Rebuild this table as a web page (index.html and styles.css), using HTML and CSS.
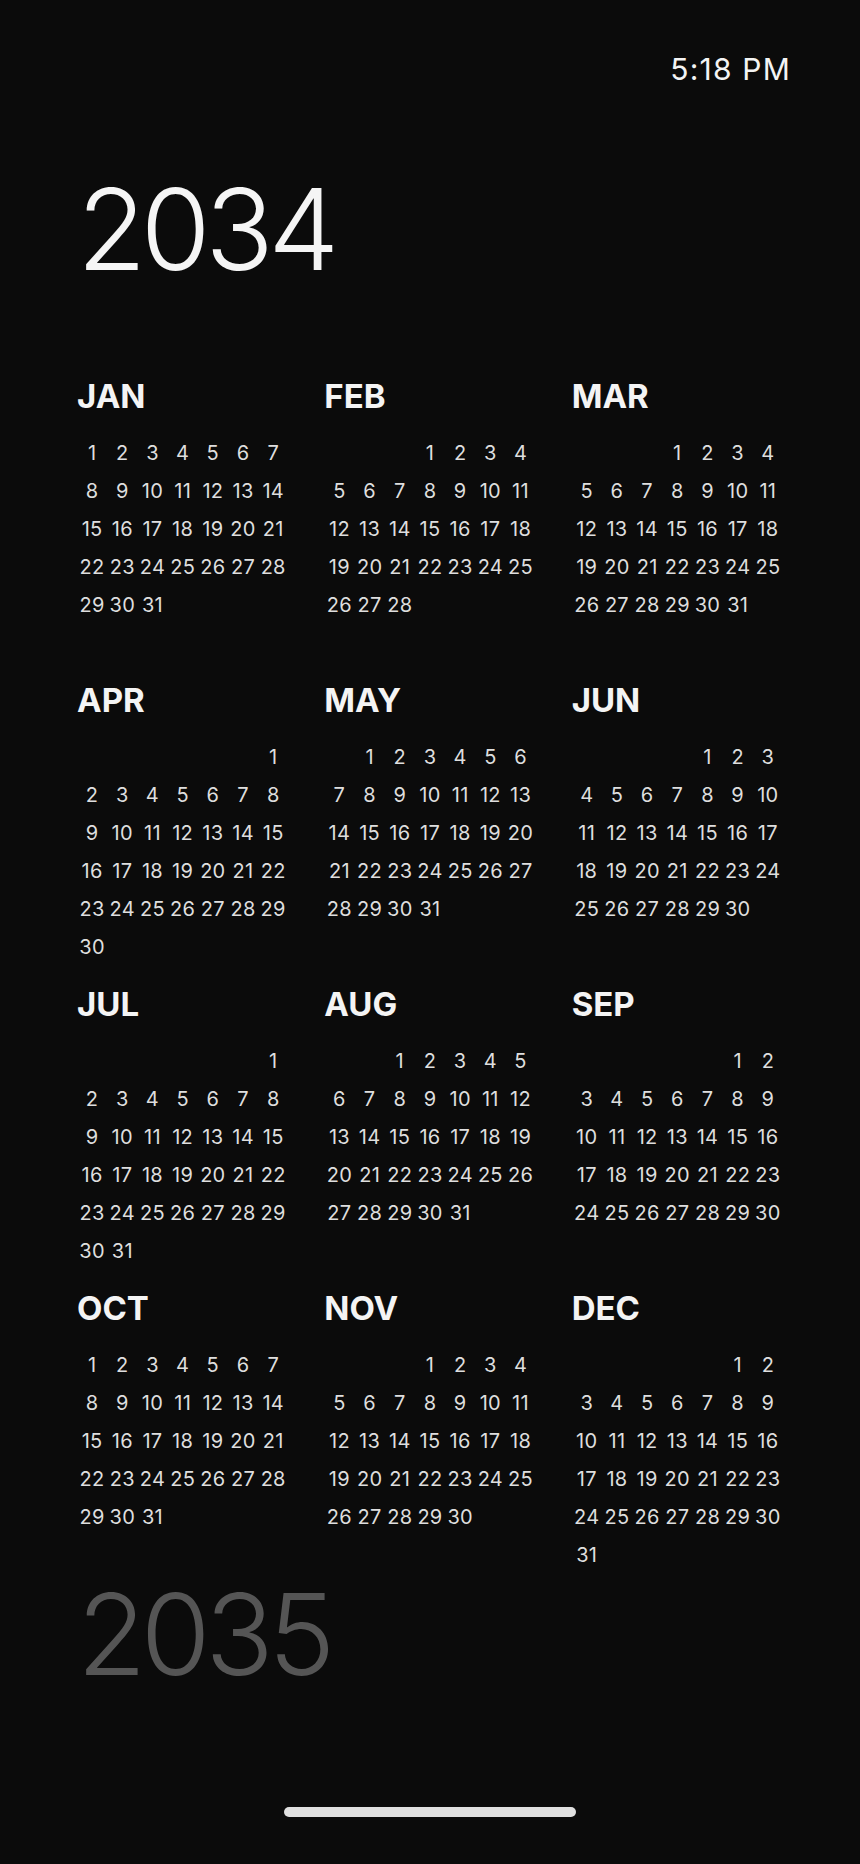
FILE: index.html
```html
<!DOCTYPE html>
<html lang="en">
<head>
<meta charset="utf-8">
<title>2034</title>
<link rel="stylesheet" href="styles.css">
</head>
<body>
<div class="screen">
  <header class="status"><span class="time">5:18 PM</span></header>
  <h1 class="year">2034</h1>
  <section class="months">
    <div class="month"><h2>JAN</h2><div class="days"><span class="s1">1</span><span>2</span><span>3</span><span>4</span><span>5</span><span>6</span><span>7</span><span>8</span><span>9</span><span>10</span><span>11</span><span>12</span><span>13</span><span>14</span><span>15</span><span>16</span><span>17</span><span>18</span><span>19</span><span>20</span><span>21</span><span>22</span><span>23</span><span>24</span><span>25</span><span>26</span><span>27</span><span>28</span><span>29</span><span>30</span><span>31</span></div></div>
    <div class="month"><h2>FEB</h2><div class="days"><span class="s4">1</span><span>2</span><span>3</span><span>4</span><span>5</span><span>6</span><span>7</span><span>8</span><span>9</span><span>10</span><span>11</span><span>12</span><span>13</span><span>14</span><span>15</span><span>16</span><span>17</span><span>18</span><span>19</span><span>20</span><span>21</span><span>22</span><span>23</span><span>24</span><span>25</span><span>26</span><span>27</span><span>28</span></div></div>
    <div class="month"><h2>MAR</h2><div class="days"><span class="s4">1</span><span>2</span><span>3</span><span>4</span><span>5</span><span>6</span><span>7</span><span>8</span><span>9</span><span>10</span><span>11</span><span>12</span><span>13</span><span>14</span><span>15</span><span>16</span><span>17</span><span>18</span><span>19</span><span>20</span><span>21</span><span>22</span><span>23</span><span>24</span><span>25</span><span>26</span><span>27</span><span>28</span><span>29</span><span>30</span><span>31</span></div></div>
    <div class="month"><h2>APR</h2><div class="days"><span class="s7">1</span><span>2</span><span>3</span><span>4</span><span>5</span><span>6</span><span>7</span><span>8</span><span>9</span><span>10</span><span>11</span><span>12</span><span>13</span><span>14</span><span>15</span><span>16</span><span>17</span><span>18</span><span>19</span><span>20</span><span>21</span><span>22</span><span>23</span><span>24</span><span>25</span><span>26</span><span>27</span><span>28</span><span>29</span><span>30</span></div></div>
    <div class="month"><h2>MAY</h2><div class="days"><span class="s2">1</span><span>2</span><span>3</span><span>4</span><span>5</span><span>6</span><span>7</span><span>8</span><span>9</span><span>10</span><span>11</span><span>12</span><span>13</span><span>14</span><span>15</span><span>16</span><span>17</span><span>18</span><span>19</span><span>20</span><span>21</span><span>22</span><span>23</span><span>24</span><span>25</span><span>26</span><span>27</span><span>28</span><span>29</span><span>30</span><span>31</span></div></div>
    <div class="month"><h2>JUN</h2><div class="days"><span class="s5">1</span><span>2</span><span>3</span><span>4</span><span>5</span><span>6</span><span>7</span><span>8</span><span>9</span><span>10</span><span>11</span><span>12</span><span>13</span><span>14</span><span>15</span><span>16</span><span>17</span><span>18</span><span>19</span><span>20</span><span>21</span><span>22</span><span>23</span><span>24</span><span>25</span><span>26</span><span>27</span><span>28</span><span>29</span><span>30</span></div></div>
    <div class="month"><h2>JUL</h2><div class="days"><span class="s7">1</span><span>2</span><span>3</span><span>4</span><span>5</span><span>6</span><span>7</span><span>8</span><span>9</span><span>10</span><span>11</span><span>12</span><span>13</span><span>14</span><span>15</span><span>16</span><span>17</span><span>18</span><span>19</span><span>20</span><span>21</span><span>22</span><span>23</span><span>24</span><span>25</span><span>26</span><span>27</span><span>28</span><span>29</span><span>30</span><span>31</span></div></div>
    <div class="month"><h2>AUG</h2><div class="days"><span class="s3">1</span><span>2</span><span>3</span><span>4</span><span>5</span><span>6</span><span>7</span><span>8</span><span>9</span><span>10</span><span>11</span><span>12</span><span>13</span><span>14</span><span>15</span><span>16</span><span>17</span><span>18</span><span>19</span><span>20</span><span>21</span><span>22</span><span>23</span><span>24</span><span>25</span><span>26</span><span>27</span><span>28</span><span>29</span><span>30</span><span>31</span></div></div>
    <div class="month"><h2>SEP</h2><div class="days"><span class="s6">1</span><span>2</span><span>3</span><span>4</span><span>5</span><span>6</span><span>7</span><span>8</span><span>9</span><span>10</span><span>11</span><span>12</span><span>13</span><span>14</span><span>15</span><span>16</span><span>17</span><span>18</span><span>19</span><span>20</span><span>21</span><span>22</span><span>23</span><span>24</span><span>25</span><span>26</span><span>27</span><span>28</span><span>29</span><span>30</span></div></div>
    <div class="month"><h2>OCT</h2><div class="days"><span class="s1">1</span><span>2</span><span>3</span><span>4</span><span>5</span><span>6</span><span>7</span><span>8</span><span>9</span><span>10</span><span>11</span><span>12</span><span>13</span><span>14</span><span>15</span><span>16</span><span>17</span><span>18</span><span>19</span><span>20</span><span>21</span><span>22</span><span>23</span><span>24</span><span>25</span><span>26</span><span>27</span><span>28</span><span>29</span><span>30</span><span>31</span></div></div>
    <div class="month"><h2>NOV</h2><div class="days"><span class="s4">1</span><span>2</span><span>3</span><span>4</span><span>5</span><span>6</span><span>7</span><span>8</span><span>9</span><span>10</span><span>11</span><span>12</span><span>13</span><span>14</span><span>15</span><span>16</span><span>17</span><span>18</span><span>19</span><span>20</span><span>21</span><span>22</span><span>23</span><span>24</span><span>25</span><span>26</span><span>27</span><span>28</span><span>29</span><span>30</span></div></div>
    <div class="month"><h2>DEC</h2><div class="days"><span class="s6">1</span><span>2</span><span>3</span><span>4</span><span>5</span><span>6</span><span>7</span><span>8</span><span>9</span><span>10</span><span>11</span><span>12</span><span>13</span><span>14</span><span>15</span><span>16</span><span>17</span><span>18</span><span>19</span><span>20</span><span>21</span><span>22</span><span>23</span><span>24</span><span>25</span><span>26</span><span>27</span><span>28</span><span>29</span><span>30</span><span>31</span></div></div>
  </section>
  <div class="next-year">2035</div>
  <div class="home-bar"></div>
</div>
</body>
</html>
```
FILE: styles.css
```css
html, body {
  margin: 0;
  padding: 0;
  background: #0b0b0b;
}

.screen {
  width: 860px;
  height: 1864px;
  background: #0b0b0b;
  font-family: Inter, "Noto Sans", "Liberation Sans", sans-serif;
  color: #f2f2f2;
  display: flex;
  flex-direction: column;
  overflow: hidden;
}

.status {
  display: flex;
  justify-content: flex-end;
  padding: 51px 69px 0 0;
}

.time {
  font-size: 30px;
  line-height: 36px;
  font-weight: 400;
  letter-spacing: 1.2px;
  color: #f4f4f4;
}

.year {
  margin: 86px 0 0 0;
  padding-left: 77px;
  font-size: 113px;
  line-height: 113px;
  font-weight: 300;
  letter-spacing: -5.5px;
  color: #f5f5f5;
}

.months {
  margin-top: 90px;
  padding: 0 77px;
  display: grid;
  grid-template-columns: repeat(3, 1fr);
  column-gap: 36px;
  row-gap: 18px;
}

.month h2 {
  margin: 0;
  font-size: 33px;
  line-height: 40px;
  font-weight: 700;
  color: #f4f4f4;
}

.days {
  margin-top: 18px;
  display: grid;
  grid-template-columns: repeat(7, 1fr);
  grid-template-rows: repeat(6, 38px);
  font-size: 20px;
  line-height: 38px;
  font-weight: 400;
  letter-spacing: 0.3px;
  color: #dedede;
  text-align: center;
}

.s1 { grid-column-start: 1; }
.s2 { grid-column-start: 2; }
.s3 { grid-column-start: 3; }
.s4 { grid-column-start: 4; }
.s5 { grid-column-start: 5; }
.s6 { grid-column-start: 6; }
.s7 { grid-column-start: 7; }

.next-year {
  margin-top: 4px;
  padding-left: 77px;
  font-size: 113px;
  line-height: 113px;
  font-weight: 300;
  letter-spacing: -5.5px;
  color: #555555;
}

.home-bar {
  align-self: center;
  margin-top: 116px;
  width: 292px;
  height: 10px;
  border-radius: 5px;
  background: #e0e0e0;
}
```
